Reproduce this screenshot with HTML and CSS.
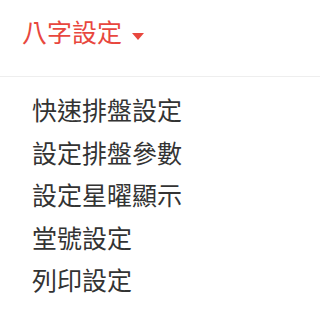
FILE: index.html
```html
<!DOCTYPE html>
<html lang="zh-Hant">
<head>
<meta charset="utf-8">
<link rel="stylesheet" href="styles.css">
</head>
<body>
<div class="header">
  <span class="title">八字設定</span>
  <span class="caret"></span>
</div>
<ul class="menu">
  <li>快速排盤設定</li>
  <li>設定排盤參數</li>
  <li>設定星曜顯示</li>
  <li>堂號設定</li>
  <li>列印設定</li>
</ul>
</body>
</html>
```
FILE: styles.css
```css
html, body {
  margin: 0;
  padding: 0;
  background: #fff;
}
body {
  font-family: "Noto Sans CJK TC", "Noto Sans CJK SC", sans-serif;
}
.header {
  display: flex;
  align-items: flex-start;
  height: 77px;
  box-sizing: border-box;
  padding: 19px 0 0 22px;
  border-bottom: 1px solid #eeeeee;
}
.title {
  font-size: 25px;
  line-height: 25px;
  color: #e8473e;
}
.caret {
  width: 0;
  height: 0;
  margin: 14px 0 0 10px;
  border-left: 6.5px solid transparent;
  border-right: 6.5px solid transparent;
  border-top: 7px solid #e8473e;
}
.menu {
  list-style: none;
  margin: 0;
  padding: 11px 0 0 32px;
}
.menu li {
  font-size: 25px;
  line-height: 42.5px;
  color: #333333;
}
```
